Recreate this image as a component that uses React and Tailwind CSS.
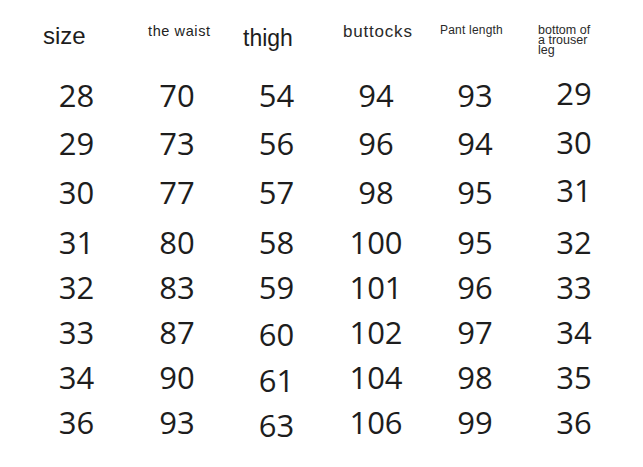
const headFont = { fontFamily: '"Liberation Sans", Arial, sans-serif' };
const numFont = { fontFamily: '"Open Sans", "Noto Sans", sans-serif' };

const rows = [
  { h: "h-[48px]", vals: ["28", "70", "54", "94", "93", "29"], shift: ["", "", "", "", "", "-mt-[2px]"] },
  { h: "h-[49px]", vals: ["29", "73", "56", "96", "94", "30"], shift: ["", "", "", "", "", "-mt-[1px]"] },
  { h: "h-[50px]", vals: ["30", "77", "57", "98", "95", "31"], shift: ["", "", "", "", "", "-mt-[2px]"] },
  { h: "h-[45px]", vals: ["31", "80", "58", "100", "95", "32"], shift: ["", "", "", "", "", ""] },
  { h: "h-[45px]", vals: ["32", "83", "59", "101", "96", "33"], shift: ["", "", "", "", "", ""] },
  { h: "h-[45px]", vals: ["33", "87", "60", "102", "97", "34"], shift: ["", "", "mt-[2px]", "", "", ""] },
  { h: "h-[45px]", vals: ["34", "90", "61", "104", "98", "35"], shift: ["", "", "mt-[3px]", "", "", ""] },
  { h: "h-[45px]", vals: ["36", "93", "63", "106", "99", "36"], shift: ["", "", "mt-[3px]", "", "", ""] },
];

const cols = "grid grid-cols-[101px_100px_99px_100px_98px_100px] pl-[26px]";

export default function App() {
  return (
    <div className="w-[643px] h-[467px] bg-white overflow-hidden text-[#1d1d1d]">
      {/* header labels */}
      <div className={`${cols} h-[80px] items-start`} style={headFont}>
        <div className="pl-[17px] pt-[24px] text-[24px] leading-none">size</div>
        <div className="pl-[21px] pt-[24px] text-[14.5px] leading-none tracking-[0.6px] text-[#222]">the waist</div>
        <div className="pl-[16px] pt-[27px] text-[23px] leading-none">thigh</div>
        <div className="pl-[17px] pt-[23px] text-[17px] leading-none tracking-[0.8px] text-[#2a2a2a]">buttocks</div>
        <div className="pl-[14px] pt-[24px] text-[12px] leading-none tracking-[0.2px] text-[#2a2a2a]">Pant length</div>
        <div className="pl-[14px] pt-[25px] text-[12.5px] leading-[10px] text-[#2a2a2a]">
          <span className="block">bottom of</span>
          <span className="block">a trouser</span>
          <span className="block">leg</span>
        </div>
      </div>

      {/* size rows */}
      {rows.map((r, i) => (
        <div key={i} className={`${cols} ${r.h} items-start`} style={numFont}>
          {r.vals.map((v, j) => (
            <div key={j} className={`text-center text-[31px] leading-none ${r.shift[j]}`}>
              {v}
            </div>
          ))}
        </div>
      ))}
    </div>
  );
}
